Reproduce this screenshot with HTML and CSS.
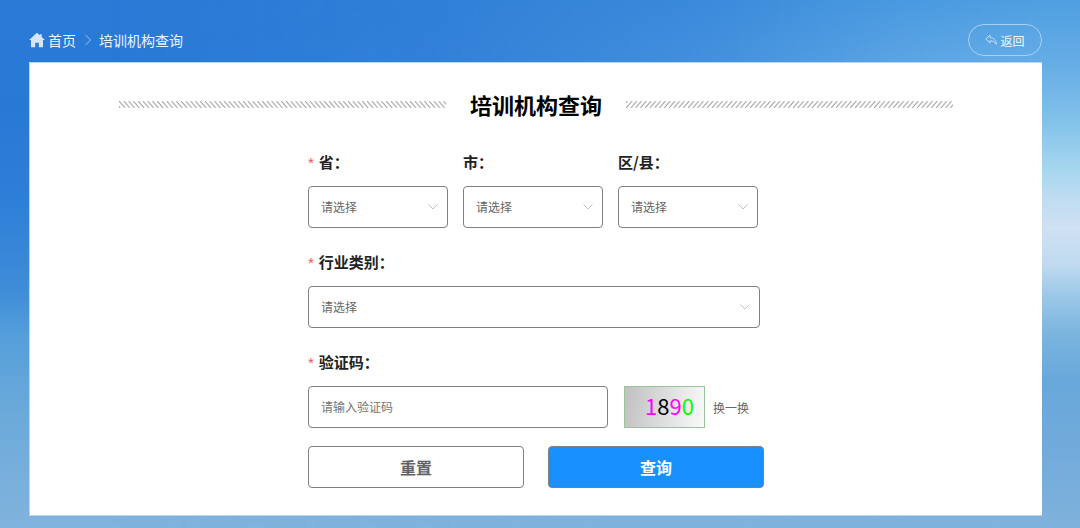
FILE: index.html
```html
<!DOCTYPE html>
<html lang="zh-CN">
<head>
<meta charset="utf-8">
<meta name="viewport" content="width=device-width, initial-scale=1">
<title>培训机构查询</title>
<link rel="stylesheet" href="styles.css">
</head>
<body>
<div class="page">
  <header class="topbar">
    <nav class="crumbs" aria-label="面包屑">
      <a class="crumb-home" href="#">
        <svg class="icon-home" viewBox="0 0 16 16" aria-hidden="true"><path d="M8 .8 0 8h2v7.300h4.200v-4.500h3.600v4.500H14V8h2l-3.300-3V2.200h-2v1z"/></svg>
        <span>首页</span>
      </a>
      <svg class="icon-sep" viewBox="0 0 8 12" aria-hidden="true"><path d="m1.500 1 5 5-5 5"/></svg>
      <span class="crumb-current">培训机构查询</span>
    </nav>
    <button class="back" type="button">
      <svg class="icon-back" viewBox="0 0 12 12" aria-hidden="true"><path d="M5 1.200.8 5 5 9V6.800c2.800-.1 4.800 1 6.300 3.500C11.200 6.500 9 3.700 5 3.500z"/></svg>
      <span>返回</span>
    </button>
  </header>

  <main class="panel">
    <div class="heading">
      <svg class="hatch" aria-hidden="true">
        <defs><pattern id="hatch-left" width="4.770" height="7" patternUnits="userSpaceOnUse"><path class="hatch-line" d="M-4.770 0 1.230 7M0 0l6 7" /></pattern></defs>
        <rect width="100%" height="7" fill="url(#hatch-left)"/>
      </svg>
      <h1 class="title">培训机构查询</h1>
      <svg class="hatch" aria-hidden="true">
        <defs><pattern id="hatch-right" width="4.770" height="7" patternUnits="userSpaceOnUse"><path class="hatch-line" d="M1.230 0l-6 7M6 0 0 7" /></pattern></defs>
        <rect width="100%" height="7" fill="url(#hatch-right)"/>
      </svg>
    </div>

    <form class="form">
      <div class="region">
        <div class="field">
          <label class="label required" for="province">省：</label>
          <div class="select-wrap">
            <select class="control" id="province"><option>请选择</option></select>
            <svg class="chevron" viewBox="0 0 10 6" aria-hidden="true"><path d="m.5.500 4.500 4.500L9.500.500"/></svg>
          </div>
        </div>
        <div class="field">
          <label class="label" for="city">市：</label>
          <div class="select-wrap">
            <select class="control" id="city"><option>请选择</option></select>
            <svg class="chevron" viewBox="0 0 10 6" aria-hidden="true"><path d="m.5.500 4.500 4.500L9.500.500"/></svg>
          </div>
        </div>
        <div class="field">
          <label class="label" for="county">区/县：</label>
          <div class="select-wrap">
            <select class="control" id="county"><option>请选择</option></select>
            <svg class="chevron" viewBox="0 0 10 6" aria-hidden="true"><path d="m.5.500 4.500 4.500L9.500.500"/></svg>
          </div>
        </div>
      </div>

      <div class="field category">
        <label class="label required" for="category">行业类别：</label>
        <div class="select-wrap">
          <select class="control" id="category"><option>请选择</option></select>
          <svg class="chevron" viewBox="0 0 10 6" aria-hidden="true"><path d="m.5.500 4.500 4.500L9.500.500"/></svg>
        </div>
      </div>

      <div class="field">
        <label class="label required" for="captcha">验证码：</label>
        <div class="captcha-row">
          <input class="control captcha-input" id="captcha" type="text" placeholder="请输入验证码">
          <div class="captcha-code"><span class="magenta">1</span><span class="black">8</span><span class="magenta">9</span><span class="green">0</span></div>
          <button class="refresh" type="button">换一换</button>
        </div>
      </div>

      <div class="actions">
        <button class="btn" type="reset">重置</button>
        <button class="btn btn-primary" type="submit">查询</button>
      </div>
    </form>
  </main>
</div>
</body>
</html>
```

FILE: styles.css
```css
* {
  box-sizing: border-box;
}

body {
  margin: 0;
  font-family: "Noto Sans CJK SC", sans-serif;
  font-size: 12px;
  color: #222;
}

button,
input,
select {
  font: inherit;
}

.page {
  position: relative;
  isolation: isolate;
  min-height: 100vh;
  padding: 24px 38px 12px 29px;
  background: linear-gradient(#2a7ad6 0%, #2878d6 20%, #2f80d8 40%, #3f8dd8 55%, #559fdb 64%, #69a9d9 77%, #78afdc 90%, #80b3dd 100%);
}

/* Lighter sky and cloud, fading in towards the right */
.page::before {
  content: "";
  position: absolute;
  inset: 0;
  z-index: -1;
  background: linear-gradient(#4f9fe1 0%, #66ade6 12%, #82c2ea 23%, #a6d6ef 32%, #bcdcf1 37%, #cfe1f2 43%, #c0daf0 50%, #9cc8e8 56%, #7bb5df 63%, #68a8da 72%, #72abdb 86%, #80b2dc 100%);
  mask-image: linear-gradient(to right, transparent 10%, rgba(0, 0, 0, 0.15) 40%, rgba(0, 0, 0, 0.45) 66%, rgba(0, 0, 0, 0.85) 84%, #000 96%);
}

.topbar {
  display: flex;
  align-items: center;
  justify-content: space-between;
  height: 32px;
  margin-bottom: 6px;
}

.crumbs {
  display: flex;
  align-items: center;
  font-size: 14px;
  line-height: 20px;
  color: #eef5fd;
}

.crumb-home {
  display: flex;
  align-items: center;
  gap: 3px;
  color: inherit;
  text-decoration: none;
}

.icon-home {
  width: 16px;
  height: 16px;
  fill: #d6e6f8;
}

.icon-sep {
  width: 8px;
  height: 12px;
  margin: 0 7px 0 8px;
  fill: none;
  stroke: #9cc0ea;
}

.back {
  display: flex;
  align-items: center;
  justify-content: center;
  gap: 3px;
  width: 74px;
  height: 32px;
  padding: 0;
  border: 1px solid #a9d0f1;
  border-radius: 16px;
  background: transparent;
  color: #f0f7fd;
}

.icon-back {
  width: 12px;
  height: 12px;
  fill: none;
  stroke: #c4dff5;
}

.panel {
  padding: 25px 24px 27px;
  border: 1px solid #b9d6f3;
  border-right: 0;
  background: #fff;
  background-clip: padding-box;
}

.heading {
  display: flex;
  align-items: center;
  gap: 24px;
  max-width: 834px;
  margin: 0 auto 30px;
}

.hatch {
  flex: 1;
  min-width: 0;
  height: 7px;
}

.hatch-line {
  fill: none;
  stroke: #999;
}

.title {
  margin: 0;
  font-size: 22px;
  line-height: 32px;
  font-weight: 700;
  color: #000;
}

.form {
  max-width: 456px;
  margin: 0 auto;
}

.region {
  display: grid;
  grid-template-columns: repeat(3, 1fr);
  gap: 15px;
  margin: 0 6px 22px 0;
}

.category {
  margin: 0 4px 22px 0;
}

.label {
  display: block;
  margin-bottom: 12px;
  font-size: 15px;
  line-height: 24px;
  font-weight: 700;
}

.required::before {
  content: "*";
  margin-right: 5px;
  font-family: "Liberation Sans", sans-serif;
  font-weight: 400;
  line-height: 1;
  color: #ff4d4f;
}

.select-wrap {
  position: relative;
}

.control {
  display: block;
  width: 100%;
  height: 42px;
  padding: 0 12px 2px;
  border: 1px solid #808080;
  border-radius: 4px;
  background: #fff;
  color: #666;
  appearance: none;
}

.control::placeholder {
  color: #757575;
}

.chevron {
  position: absolute;
  top: 18px;
  right: 10px;
  width: 10px;
  height: 6px;
  fill: none;
  stroke: #c0c4cc;
  pointer-events: none;
}

.captcha-row {
  display: flex;
  align-items: center;
}

.captcha-input {
  flex: 1;
  min-width: 0;
}

.captcha-code {
  width: 81px;
  height: 42px;
  margin: 0 8px 0 16px;
  padding-left: 20px;
  border: 1px solid #9cc29c;
  background: linear-gradient(100deg, #c0c0c0, #fafafa);
  font-size: 22px;
  line-height: 36px;
}

.magenta {
  color: #f0f;
}

.black {
  color: #000;
}

.green {
  color: #0f0;
}

.refresh {
  width: 51px;
  padding: 0;
  border: 0;
  background: none;
  color: #666;
  text-align: left;
}

.actions {
  display: grid;
  grid-template-columns: 1fr 1fr;
  gap: 24px;
  margin-top: 18px;
}

.btn {
  height: 42px;
  padding: 0;
  border: 1px solid #808080;
  border-radius: 4px;
  background: #fff;
  color: #606266;
  font-size: 16px;
  font-weight: 700;
}

.btn-primary {
  background: #1890ff;
  color: #fff;
}
```
